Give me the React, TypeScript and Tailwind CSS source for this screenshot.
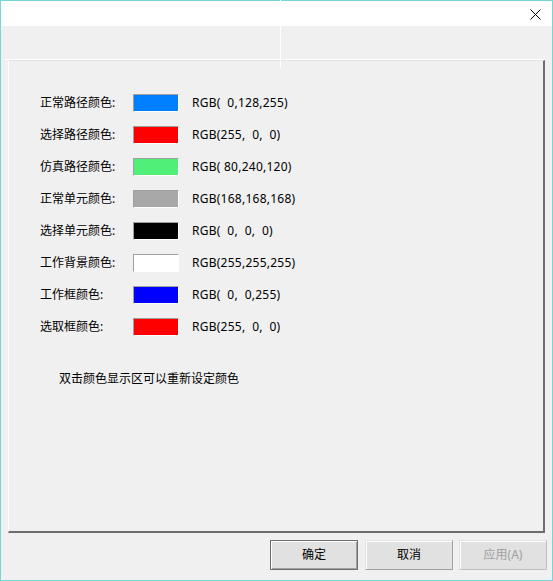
const rows = [
  { label: "正常路径颜色:", color: "#0080ff", text: "RGB(  0,128,255)" },
  { label: "选择路径颜色:", color: "#ff0000", text: "RGB(255,  0,  0)" },
  { label: "仿真路径颜色:", color: "#50f078", text: "RGB( 80,240,120)" },
  { label: "正常单元颜色:", color: "#a8a8a8", text: "RGB(168,168,168)" },
  { label: "选择单元颜色:", color: "#000000", text: "RGB(  0,  0,  0)" },
  { label: "工作背景颜色:", color: "#ffffff", text: "RGB(255,255,255)" },
  { label: "工作框颜色:", color: "#0000ff", text: "RGB(  0,  0,255)" },
  { label: "选取框颜色:", color: "#ff0000", text: "RGB(255,  0,  0)" },
];

function Button({ label, primary, disabled }: { label: string; primary?: boolean; disabled?: boolean }) {
  return (
    <button
      className={
        "w-[88px] h-[30px] bg-[#e1e1e1] text-[12px] leading-4 " +
        (primary
          ? "border border-[#6e6e6e] shadow-[inset_1px_1px_0_#fff,inset_-1px_-1px_0_#a0a0a0]"
          : disabled
          ? "border border-t-[#e3e3e3] border-l-[#e3e3e3] border-r-[#c0c0c0] border-b-[#c0c0c0] shadow-[inset_1px_1px_0_#fff]"
          : "border border-t-[#e3e3e3] border-l-[#e3e3e3] border-r-[#a0a0a0] border-b-[#a0a0a0] shadow-[inset_1px_1px_0_#fff]") +
        (disabled ? " text-[#a0a0a0]" : " text-black")
      }
    >
      {label}
    </button>
  );
}

export default function App() {
  return (
    <div
      className="relative w-[553px] h-[581px] border border-[#78d6d6] bg-[#f0f0f0] flex flex-col"
      style={{ fontFamily: '"Noto Sans", "Noto Sans CJK SC", sans-serif' }}
    >
      <div className="h-[25px] bg-white flex justify-end items-start shrink-0">
        <svg width="12" height="12" viewBox="0 0 12 12" className="mt-[8px] mr-[10px]">
          <path d="M0.5 0.5 L10.5 10.5 M10.5 0.5 L0.5 10.5" stroke="#000" strokeWidth="1" fill="none" />
        </svg>
      </div>

      <div className="mt-[33px] ml-[4px] w-[540px] border-t border-white">
        <div className="ml-[3px] h-[473px] border-t border-t-[#e3e3e3] border-l border-l-white border-r-2 border-r-[#6d6d6d] border-b-2 border-b-[#6d6d6d] pt-[26px] pl-[31px] text-[12px] leading-4 text-black">
          <div className="flex flex-col">
            {rows.map((r) => (
              <div key={r.label} className="h-8 flex items-center">
                <span className="w-[93px]">{r.label}</span>
                <span
                  className="w-[46px] h-[18px] border-t border-l border-t-[#a0a0a0] border-l-[#a0a0a0] border-b border-r border-b-white border-r-white"
                  style={{ background: r.color }}
                />
                <span className="ml-[13px] whitespace-pre tracking-[0.25px]">{r.text}</span>
              </div>
            ))}
          </div>
          <div className="mt-[28px] ml-[19px]">双击颜色显示区可以重新设定颜色</div>
        </div>
      </div>

      <div className="mt-[7px] flex justify-end pr-[5px]">
        <Button label="确定" primary />
        <div className="w-[7px]" />
        <Button label="取消" />
        <div className="w-[6px]" />
        <Button label="应用(A)" disabled />
      </div>

      <div className="absolute left-[279px] -top-px w-px h-[68px] bg-white" />
    </div>
  );
}
